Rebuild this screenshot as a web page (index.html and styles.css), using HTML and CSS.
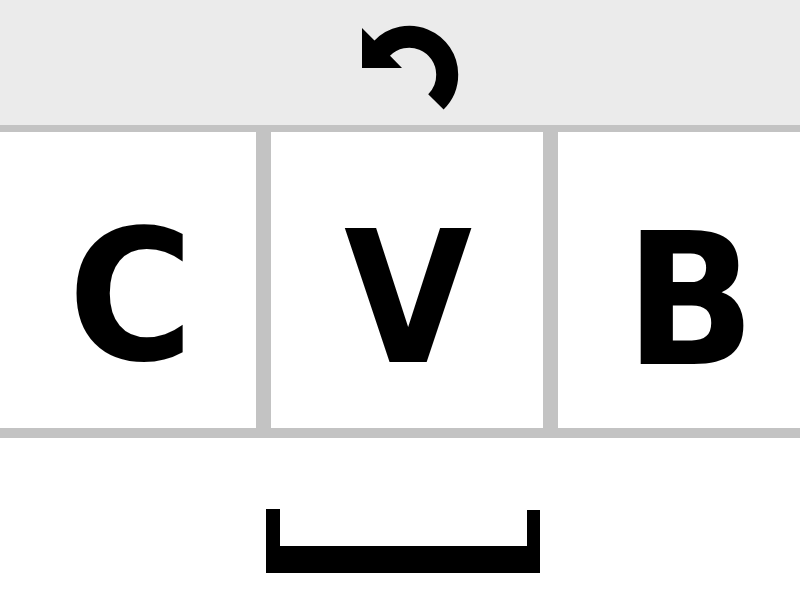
FILE: index.html
```
<!DOCTYPE html>
<html lang="en">
<head>
<meta charset="utf-8">
<title>Keyboard</title>
<link rel="stylesheet" href="styles.css">
</head>
<body>
<main class="keyboard">
<header class="toolbar"><svg class="undo" viewBox="0 0 98 84" width="98" height="84" aria-hidden="true"><path d="M1 2L13.5 14.5A48.8 48.8 0 0 1 97.2 48.5A49 49 0 0 1 82.6 83.5L67.2 68.2A27 27 0 0 0 75.2 48.5A27 27 0 0 0 29 29.8L41 42H1Z"/></svg></header>
<section class="keys">
<div class="key key-c"><span>C</span></div>
<div class="key key-v"><span>V</span></div>
<div class="key key-b"><span>B</span></div>
</section>
<footer class="space-row"><svg class="space" viewBox="0 0 274 64" width="274" height="64" aria-hidden="true"><path d="M0 0H14V37H261V1H274V64H0Z"/></svg></footer>
</main>
</body>
</html>
```
FILE: styles.css
```
* { box-sizing: border-box; }
body { margin: 0; background: #fff; }
.keyboard { width: 800px; height: 600px; overflow: hidden; display: flex; flex-direction: column; }
.toolbar { height: 125px; background: #ebebeb; padding: 26px 0 0 361px; }
svg { display: block; overflow: visible; }
.keys { height: 313px; display: grid; grid-template-columns: 256px 272px 242px; column-gap: 15px; padding: 7px 0 10px; background: #c3c3c3; }
.key { background: #fff; overflow: hidden; font: 700 184px/296px "DejaVu Sans", sans-serif; color: #000; }
.key span { display: block; width: max-content; transform-origin: 0 0; }
.key-c span { margin-left: 68px; font-size: 182px; transform: translateY(16px) scaleX(.94); }
.key-v span { margin-left: 73px; transform: translateY(18px) scaleX(.9); }
.key-b span { margin-left: 67px; transform: translateY(20px) scaleX(.93); }
.space-row { flex: 1; padding: 71px 0 0 266px; }
```
